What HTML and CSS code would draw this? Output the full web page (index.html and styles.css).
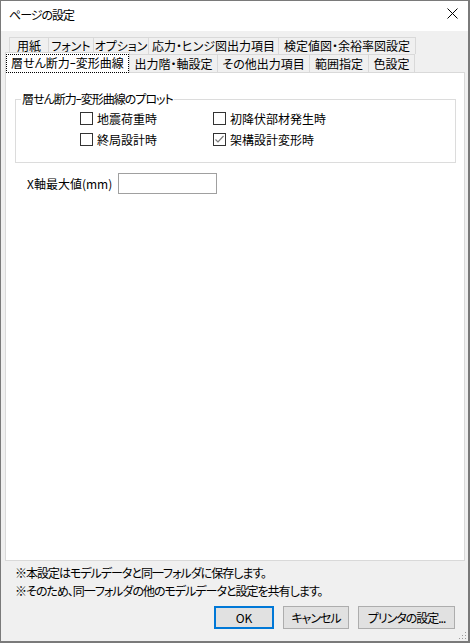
FILE: index.html
```html
<!DOCTYPE html>
<html lang="ja">
<head>
  <meta charset="UTF-8">
  <title>ページの設定</title>
  <link rel="stylesheet" href="styles.css">
</head>
<body>
  <div class="window">
    <div class="titlebar">
      <span class="title">ページの設定</span>
      <svg class="close" width="11" height="11" viewBox="0 0 11 11">
        <path d="M0.5 0.5 L10.5 10.5 M10.5 0.5 L0.5 10.5" stroke="#000" stroke-width="1" fill="none"/>
      </svg>
    </div>

    <div class="dialog">
      <div class="tabs">
        <div class="tab-row back">
          <div class="tab w39">用紙</div>
          <div class="tab w45">フォント</div>
          <div class="tab w55">オプション</div>
          <div class="tab w130">応力・ヒンジ図出力項目</div>
          <div class="tab w137">検定値図・余裕率図設定</div>
        </div>
        <div class="tab-row front">
          <div class="tab active"><span class="focus">層せん断力ｰ変形曲線</span></div>
          <div class="tab w88">出力階・軸設定</div>
          <div class="tab w92">その他出力項目</div>
          <div class="tab w59">範囲指定</div>
          <div class="tab w46">色設定</div>
        </div>
      </div>

      <div class="panel">
        <fieldset class="group">
          <legend>層せん断力ｰ変形曲線のプロット</legend>
          <div class="checks">
            <label class="check"><span class="box"></span>地震荷重時</label>
            <label class="check"><span class="box"></span>初降伏部材発生時</label>
            <label class="check"><span class="box"></span>終局設計時</label>
            <label class="check">
              <span class="box">
                <svg width="11" height="11" viewBox="0 0 11 11">
                  <path d="M1.5 5.5 L4 8 L9.5 2" stroke="#7a7a7a" stroke-width="1.2" fill="none"/>
                </svg>
              </span>架構設計変形時
            </label>
          </div>
        </fieldset>

        <div class="field">
          <span class="field-label">X軸最大値(mm)</span>
          <span class="input"></span>
        </div>
      </div>

      <div class="notes">
        <p>※本設定はモデルデータと同一フォルダに保存します。</p>
        <p>※そのため、同一フォルダの他のモデルデータと設定を共有します。</p>
      </div>

      <div class="buttons">
        <div class="button default">OK</div>
        <div class="button cancel">キャンセル</div>
        <div class="button printer">プリンタの設定...</div>
      </div>

      <svg class="grip" width="9" height="9" viewBox="0 0 9 9">
        <rect x="7" y="1" width="1" height="1" fill="#9a9a9a"/>
        <rect x="4" y="4" width="1" height="1" fill="#9a9a9a"/>
        <rect x="7" y="4" width="1" height="1" fill="#9a9a9a"/>
        <rect x="1" y="7" width="1" height="1" fill="#9a9a9a"/>
        <rect x="4" y="7" width="1" height="1" fill="#9a9a9a"/>
        <rect x="7" y="7" width="1" height="1" fill="#9a9a9a"/>
      </svg>
    </div>
  </div>
</body>
</html>
```

FILE: styles.css
```css
* {
  box-sizing: border-box;
}
body {
  margin: 0;
  font-family: "Noto Sans CJK JP", "Noto Sans", sans-serif;
  font-size: 12px;
  font-feature-settings: "palt";
  color: #000;
}
.window {
  width: 470px;
  height: 643px;
  border: 1px solid #7a7a7a;
  border-right-width: 2px;
  border-bottom-width: 2px;
  background-color: #f0f0f0;
  display: flex;
  flex-direction: column;
}
.titlebar {
  height: 30px;
  background-color: #fff;
  display: flex;
  align-items: center;
  justify-content: space-between;
  padding: 0 10px 0 8px;
}
.title {
  line-height: 14px;
  margin-top: -3px;
  letter-spacing: -1px;
}
.close {
  margin-top: -5px;
}
.dialog {
  flex: 1;
  padding: 6px 3px 0 4px;
  position: relative;
}

/* tabs */
.tab-row {
  display: flex;
  align-items: flex-end;
}
.tab {
  height: 17px;
  line-height: 15px;
  text-align: center;
  border: 1px solid #d9d9d9;
  border-bottom: none;
  margin-left: -1px;
  white-space: nowrap;
  background-color: #f0f0f0;
}
.back {
  padding-left: 5px;
}
.front {
  height: 18px;
  padding-left: 1px;
}
.front .tab {
  height: 18px;
  line-height: 17px;
}
.tab.active {
  width: 125px;
  height: 21px;
  margin-bottom: -1px;
  background-color: #fff;
  position: relative;
  z-index: 1;
  padding: 2px 1px 0;
}
.focus {
  display: block;
  outline: 1px dotted #000;
  height: 17px;
  line-height: 16px;
}
.w39 { width: 40px; }
.w45 { width: 46px; }
.w55 { width: 56px; }
.w130 { width: 131px; }
.w137 { width: 138px; }
.w88 { width: 89px; }
.w92 { width: 93px; }
.w59 { width: 60px; }
.w46 { width: 47px; }

/* panel */
.panel {
  height: 489px;
  background-color: #fff;
  border: 1px solid #d9d9d9;
}
.group {
  margin: 19px 8px 0 9px;
  padding: 4px 0 14px 0;
  border: 1px solid #dcdcdc;
}
.group legend {
  padding: 0 1px;
  margin-left: 5px;
  line-height: 14px;
  letter-spacing: -1px;
}
.checks {
  display: grid;
  grid-template-columns: 133px 1fr;
  row-gap: 4px;
  margin-left: 64px;
}
.check {
  display: flex;
  align-items: center;
  gap: 4px;
  line-height: 17px;
}
.box {
  width: 13px;
  height: 13px;
  border: 1px solid #333;
  background-color: #fff;
  display: flex;
  align-items: center;
  justify-content: center;
}
.field {
  display: flex;
  align-items: center;
  margin: 10px 0 0 21px;
}
.field-label {
  width: 91px;
}
.input {
  width: 99px;
  height: 21px;
  border: 1px solid #a0a0a0;
  background-color: #fff;
}

/* bottom */
.notes {
  padding: 3px 0 0 10px;
  letter-spacing: -1px;
}
.notes p {
  margin: 0;
  line-height: 18px;
}
.buttons {
  display: flex;
  justify-content: flex-end;
  gap: 9px;
  margin-top: 6px;
  padding-right: 10px;
}
.button {
  height: 23px;
  line-height: 21px;
  text-align: center;
  background-color: #e1e1e1;
  border: 1px solid #adadad;
}
.button.default {
  width: 60px;
  border: 2px solid #0078d7;
  line-height: 19px;
}
.button.cancel {
  width: 66px;
  letter-spacing: -1px;
}
.button.printer {
  width: 97px;
  letter-spacing: -1px;
}
.grip {
  position: absolute;
  right: 1px;
  bottom: 1px;
}
```
